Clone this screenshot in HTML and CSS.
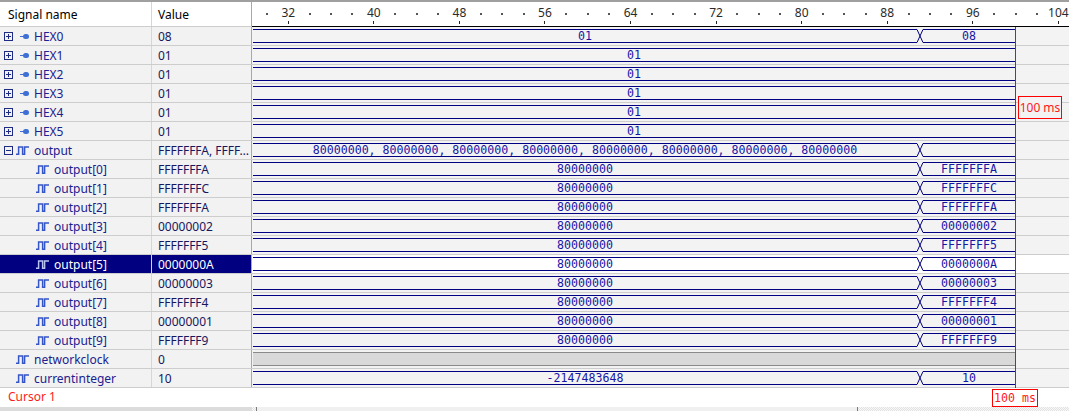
FILE: index.html
```html
<!DOCTYPE html>
<html>
<head>
<meta charset="utf-8">
<link rel="stylesheet" href="styles.css">
</head>
<body>
<svg class="defs" width="0" height="0">
  <symbol id="pulse" viewBox="0 0 13 9">
    <path d="M0 8.3H2.6V0.9H6.6V8.3H8.6V0.9H13" fill="none" stroke="currentColor" stroke-width="1.5"/>
  </symbol>
  <symbol id="xx" viewBox="0 0 6 14">
    <path d="M0 0.5L6 13.5M0 13.5L6 0.5" fill="none" stroke="#000080" stroke-width="1"/>
  </symbol>
</svg>
<div class="app">
  <div class="left">
    <div class="lhead"><div class="c1 hd">Signal name</div><div class="c2 hd">Value</div></div>
    <div class="lrow"><div class="c1"><span class="tg plus"></span><span class="bus"></span><span class="nm">HEX0</span></div><div class="c2">08</div></div>
    <div class="lrow"><div class="c1"><span class="tg plus"></span><span class="bus"></span><span class="nm">HEX1</span></div><div class="c2">01</div></div>
    <div class="lrow"><div class="c1"><span class="tg plus"></span><span class="bus"></span><span class="nm">HEX2</span></div><div class="c2">01</div></div>
    <div class="lrow"><div class="c1"><span class="tg plus"></span><span class="bus"></span><span class="nm">HEX3</span></div><div class="c2">01</div></div>
    <div class="lrow"><div class="c1"><span class="tg plus"></span><span class="bus"></span><span class="nm">HEX4</span></div><div class="c2">01</div></div>
    <div class="lrow"><div class="c1"><span class="tg plus"></span><span class="bus"></span><span class="nm">HEX5</span></div><div class="c2">01</div></div>
    <div class="lrow"><div class="c1"><span class="tg"></span><svg class="pi pi-t"><use href="#pulse"/></svg><span class="nm">output</span></div><div class="c2">FFFFFFFA, FFFF…</div></div>
    <div class="lrow"><div class="c1"><svg class="pi pi-c"><use href="#pulse"/></svg><span class="nm">output[0]</span></div><div class="c2">FFFFFFFA</div></div>
    <div class="lrow"><div class="c1"><svg class="pi pi-c"><use href="#pulse"/></svg><span class="nm">output[1]</span></div><div class="c2">FFFFFFFC</div></div>
    <div class="lrow"><div class="c1"><svg class="pi pi-c"><use href="#pulse"/></svg><span class="nm">output[2]</span></div><div class="c2">FFFFFFFA</div></div>
    <div class="lrow"><div class="c1"><svg class="pi pi-c"><use href="#pulse"/></svg><span class="nm">output[3]</span></div><div class="c2">00000002</div></div>
    <div class="lrow"><div class="c1"><svg class="pi pi-c"><use href="#pulse"/></svg><span class="nm">output[4]</span></div><div class="c2">FFFFFFF5</div></div>
    <div class="lrow sel"><div class="c1"><svg class="pi pi-c"><use href="#pulse"/></svg><span class="nm">output[5]</span></div><div class="c2">0000000A</div></div>
    <div class="lrow"><div class="c1"><svg class="pi pi-c"><use href="#pulse"/></svg><span class="nm">output[6]</span></div><div class="c2">00000003</div></div>
    <div class="lrow"><div class="c1"><svg class="pi pi-c"><use href="#pulse"/></svg><span class="nm">output[7]</span></div><div class="c2">FFFFFFF4</div></div>
    <div class="lrow"><div class="c1"><svg class="pi pi-c"><use href="#pulse"/></svg><span class="nm">output[8]</span></div><div class="c2">00000001</div></div>
    <div class="lrow"><div class="c1"><svg class="pi pi-c"><use href="#pulse"/></svg><span class="nm">output[9]</span></div><div class="c2">FFFFFFF9</div></div>
    <div class="lrow"><div class="c1"><svg class="pi pi-r"><use href="#pulse"/></svg><span class="nm">networkclock</span></div><div class="c2">0</div></div>
    <div class="lrow"><div class="c1"><svg class="pi pi-r"><use href="#pulse"/></svg><span class="nm">currentinteger</span></div><div class="c2">10</div></div>
    <div class="lcursor">Cursor 1</div>
    <div class="lfoot"></div>
  </div>
  <div class="right">
    <div class="ruler">
      <div class="cell"><i class="dot"></i></div>
      <div class="cell"><span class="num">32</span><i class="tick"></i></div>
      <div class="cell"><i class="dot"></i></div><div class="cell"><i class="dot"></i></div><div class="cell"><i class="dot"></i></div>
      <div class="cell"><span class="num">40</span><i class="tick"></i></div>
      <div class="cell"><i class="dot"></i></div><div class="cell"><i class="dot"></i></div><div class="cell"><i class="dot"></i></div>
      <div class="cell"><span class="num">48</span><i class="tick"></i></div>
      <div class="cell"><i class="dot"></i></div><div class="cell"><i class="dot"></i></div><div class="cell"><i class="dot"></i></div>
      <div class="cell"><span class="num">56</span><i class="tick"></i></div>
      <div class="cell"><i class="dot"></i></div><div class="cell"><i class="dot"></i></div><div class="cell"><i class="dot"></i></div>
      <div class="cell"><span class="num">64</span><i class="tick"></i></div>
      <div class="cell"><i class="dot"></i></div><div class="cell"><i class="dot"></i></div><div class="cell"><i class="dot"></i></div>
      <div class="cell"><span class="num">72</span><i class="tick"></i></div>
      <div class="cell"><i class="dot"></i></div><div class="cell"><i class="dot"></i></div><div class="cell"><i class="dot"></i></div>
      <div class="cell"><span class="num">80</span><i class="tick"></i></div>
      <div class="cell"><i class="dot"></i></div><div class="cell"><i class="dot"></i></div><div class="cell"><i class="dot"></i></div>
      <div class="cell"><span class="num">88</span><i class="tick"></i></div>
      <div class="cell"><i class="dot"></i></div><div class="cell"><i class="dot"></i></div><div class="cell"><i class="dot"></i></div>
      <div class="cell"><span class="num">96</span><i class="tick"></i></div>
      <div class="cell"><i class="dot"></i></div><div class="cell"><i class="dot"></i></div><div class="cell"><i class="dot"></i></div>
      <div class="cell"><span class="num">104</span><i class="tick"></i></div>
    </div>
    <div class="waves">
      <div class="wrow"><div class="seg s1">01</div><svg class="xs"><use href="#xx"/></svg><div class="seg s2">08</div></div>
      <div class="wrow"><div class="seg sf">01</div></div>
      <div class="wrow"><div class="seg sf">01</div></div>
      <div class="wrow"><div class="seg sf">01</div></div>
      <div class="wrow"><div class="seg sf">01</div></div>
      <div class="wrow"><div class="seg sf">01</div></div>
      <div class="wrow"><div class="seg s1">80000000, 80000000, 80000000, 80000000, 80000000, 80000000, 80000000, 80000000</div><svg class="xs"><use href="#xx"/></svg><div class="seg s2"></div></div>
      <div class="wrow"><div class="seg s1">80000000</div><svg class="xs"><use href="#xx"/></svg><div class="seg s2">FFFFFFFA</div></div>
      <div class="wrow"><div class="seg s1">80000000</div><svg class="xs"><use href="#xx"/></svg><div class="seg s2">FFFFFFFC</div></div>
      <div class="wrow"><div class="seg s1">80000000</div><svg class="xs"><use href="#xx"/></svg><div class="seg s2">FFFFFFFA</div></div>
      <div class="wrow"><div class="seg s1">80000000</div><svg class="xs"><use href="#xx"/></svg><div class="seg s2">00000002</div></div>
      <div class="wrow"><div class="seg s1">80000000</div><svg class="xs"><use href="#xx"/></svg><div class="seg s2">FFFFFFF5</div></div>
      <div class="wrow wsel"><div class="seg s1">80000000</div><svg class="xs"><use href="#xx"/></svg><div class="seg s2">0000000A</div></div>
      <div class="wrow"><div class="seg s1">80000000</div><svg class="xs"><use href="#xx"/></svg><div class="seg s2">00000003</div></div>
      <div class="wrow"><div class="seg s1">80000000</div><svg class="xs"><use href="#xx"/></svg><div class="seg s2">FFFFFFF4</div></div>
      <div class="wrow"><div class="seg s1">80000000</div><svg class="xs"><use href="#xx"/></svg><div class="seg s2">00000001</div></div>
      <div class="wrow"><div class="seg s1">80000000</div><svg class="xs"><use href="#xx"/></svg><div class="seg s2">FFFFFFF9</div></div>
      <div class="wrow"><div class="band"></div></div>
      <div class="wrow"><div class="seg s1">-2147483648</div><svg class="xs"><use href="#xx"/></svg><div class="seg s2">10</div></div>
      <div class="cline"></div>
      <div class="ctag">100 ms</div>
    </div>
    <div class="rcursor"><div class="ctag2">100 ms</div></div>
    <div class="rfoot"><div class="thumb"></div></div>
  </div>
</div>
</body>
</html>
```
FILE: styles.css
```css
* { box-sizing: border-box; margin: 0; padding: 0; }
html, body { width: 1069px; height: 411px; overflow: hidden; background: #fff; }
body { font-family: "Noto Sans", "Open Sans", sans-serif; font-size: 12px; color: #000; }

.defs { position: absolute; width: 0; height: 0; }

.app {
  display: grid;
  grid-template-columns: 252px 817px;
  border-top: 2px solid #a0a0a0;
  height: 411px;
}

/* ---------- left panel ---------- */
.left { display: flex; flex-direction: column; }
.lhead, .lrow {
  display: flex;
  height: 19px;
  border-bottom: 1px solid #cdcdcd;
  background: #f2f2f2;
}
.lhead { height: 25px; background: #fff; }
.c1 {
  width: 152px;
  border-right: 1px solid #d6d6d6;
  display: flex;
  align-items: center;
  white-space: nowrap;
  overflow: hidden;
}
.c2 {
  width: 100px;
  border-right: 1px solid #a8a8a8;
  display: flex;
  align-items: center;
  padding-left: 6px;
  white-space: nowrap;
  overflow: hidden;
  color: #17175e;
}
.c1.hd { padding-left: 8px; color: #000; }
.c2.hd { color: #000; }
.nm { color: #20208f; margin-left: 5px; }

.tg {
  flex: none;
  position: relative;
  width: 9px;
  height: 9px;
  margin-left: 4px;
  border: 1px solid #1d2b85;
}
.tg::before {
  content: "";
  position: absolute;
  left: 1px; top: 3px;
  width: 5px; height: 1px;
  background: #1d2b85;
}
.tg.plus::after {
  content: "";
  position: absolute;
  left: 3px; top: 1px;
  width: 1px; height: 5px;
  background: #1d2b85;
}
.bus {
  flex: none;
  position: relative;
  width: 9px;
  height: 5px;
  margin-left: 7px;
}
.bus::before {
  content: "";
  position: absolute;
  left: 0; top: 2px;
  width: 4px; height: 1px;
  background: #3d6fd6;
}
.bus::after {
  content: "";
  position: absolute;
  left: 3px; top: 0;
  width: 6px; height: 5px;
  border-radius: 2.5px;
  background: #3d6fd6;
}
.pi { flex: none; width: 13px; height: 9px; color: #3556c8; }
.pi-t { margin-left: 3px; }
.pi-r { margin-left: 16px; }
.pi-c { margin-left: 36px; }

.sel { background: #000080; }
.sel .nm, .sel .c2 { color: #fff; }
.sel .pi { color: #b8c4f0; }

.lcursor {
  height: 19px;
  padding-left: 8px;
  line-height: 18px;
  color: #ff1a1a;
  background: #fff;
}
.lfoot { height: 4px; background: #dcdcdc; }

/* ---------- right panel ---------- */
.right { display: flex; flex-direction: column; }
.ruler {
  height: 25px;
  border-bottom: 1px solid #000;
  background: #fff;
  display: flex;
  padding-left: 4.2px;
  overflow: visible;
}
.cell {
  flex: none;
  width: 21.4px;
  display: flex;
  flex-direction: column;
  align-items: center;
}
.num {
  margin-top: 4px;
  height: 14px;
  line-height: 14px;
  font-size: 12px;
  color: #2a2a2a;
  white-space: nowrap;
}
.tick { display: block; width: 1px; height: 3px; margin-top: 1px; background: #222; }
.dot { display: block; width: 2px; height: 2px; margin-top: 11px; background: #555; }

.waves { position: relative; display: flex; flex-direction: column; }
.wrow {
  height: 19px;
  padding-top: 2px;
  border-bottom: 1px solid #cdcdcd;
  background: #f3f3f3;
  display: flex;
  align-items: flex-start;
}
.wsel { background: #fff; }
.seg {
  flex: none;
  height: 14px;
  border-top: 1px solid #000080;
  border-bottom: 1px solid #000080;
  font-family: "DejaVu Sans Mono", monospace;
  font-size: 11.6px;
  line-height: 12px;
  text-align: center;
  color: #1616a6;
  white-space: nowrap;
  overflow: hidden;
}
.s1 { width: 664px; margin-left: 1px; }
.s2 { width: 92px; }
.sf { width: 762px; margin-left: 1px; }
.xs { flex: none; width: 6px; height: 14px; }
.band {
  width: 762px;
  margin-left: 1px;
  height: 14px;
  border-top: 1px solid #8a8a8a;
  border-bottom: 1px solid #8a8a8a;
  background: #d9d9d9;
}

.cline {
  position: absolute;
  left: 763px;
  top: 0;
  bottom: 0;
  width: 1px;
  background: #ff0000;
}
.ctag {
  position: absolute;
  left: 766px;
  top: 69px;
  width: 44px;
  height: 23px;
  border: 1px solid #ff0000;
  background: #f3f3f3;
  color: #ff1a1a;
  font-size: 12px;
  line-height: 21px;
  text-align: center;
}
.rcursor { position: relative; height: 19px; background: #fff; }
.ctag2 {
  position: absolute;
  left: 740px;
  top: 1px;
  width: 46px;
  height: 18px;
  border: 1px solid #ff0000;
  background: #fff;
  color: #ff1a1a;
  font-family: "DejaVu Sans Mono", monospace;
  font-size: 11.6px;
  line-height: 16px;
  text-align: center;
}
.rfoot {
  height: 4px;
  display: flex;
  background: repeating-conic-gradient(#e2e2e2 0 25%, #f7f7f7 0 50%) 0 0 / 2px 2px;
}
.thumb {
  margin-left: 4px;
  width: 602px;
  height: 4px;
  border-left: 1px solid #7a7a7a;
  border-right: 1px solid #7a7a7a;
  background: #f0f0f0;
}
```
